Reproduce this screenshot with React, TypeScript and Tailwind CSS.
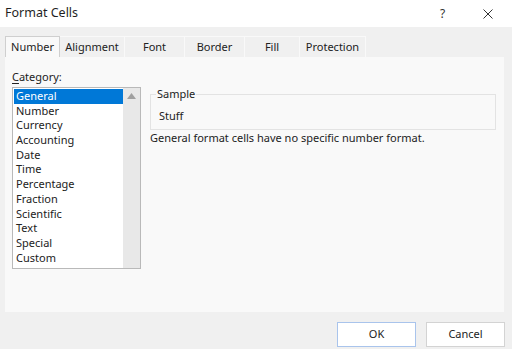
import { useState } from 'react';

const categories = [
  'General', 'Number', 'Currency', 'Accounting', 'Date', 'Time',
  'Percentage', 'Fraction', 'Scientific', 'Text', 'Special', 'Custom',
];

const tabs = [
  { name: 'Number', w: 'w-[55px]' },
  { name: 'Alignment', w: 'w-[65px]' },
  { name: 'Font', w: 'w-[60px]' },
  { name: 'Border', w: 'w-[60px]' },
  { name: 'Fill', w: 'w-[55px]' },
  { name: 'Protection', w: 'w-[66px]' },
];

export default function App() {
  const [selected, setSelected] = useState('General');
  const [tab, setTab] = useState('Number');

  return (
    <div className="w-[512px] h-[349px] bg-[#f0f0f0] flex flex-col text-[#222] font-['Noto_Sans',sans-serif] text-[11px] overflow-hidden">
      {/* Title bar */}
      <div className="h-[27px] bg-white flex items-center pl-[5px] shrink-0">
        <span className="text-[12.5px] text-[#1f1f1f]">Format Cells</span>
        <div className="ml-auto flex items-center">
          <span className="text-[12px] w-[10px] mr-[33px] text-[#333]">?</span>
          <svg className="w-[10px] h-[10px] mr-[19px]" viewBox="0 0 10 10" fill="none" stroke="#333" strokeWidth="1">
            <path d="M0.5 0.5l9 9M9.5 0.5l-9 9" />
          </svg>
        </div>
      </div>

      <div className="flex-1 flex flex-col pl-[5px] pr-[8px]">
        {/* Tabs */}
        <div className="flex mt-[9px] h-[21px]">
          {tabs.map((t) => (
            <button
              key={t.name}
              onClick={() => setTab(t.name)}
              className={`${t.w} h-[21px] flex items-center justify-center border border-b-0 ${
                tab === t.name
                  ? 'bg-[#f9f9f9] border-[#cfcfcf] z-10'
                  : 'bg-[#f0f0f0] border-[#f9f9f9] border-l-0'
              }`}
            >
              {t.name}
            </button>
          ))}
        </div>

        {/* Panel */}
        <div className="h-[255px] bg-[#f9f9f9] flex pl-[7px] pt-[10px]">
          <div className="flex flex-col w-[129px]">
            <div className="h-[20px] leading-[20px]">
              <span className="underline underline-offset-2">C</span>ategory:
            </div>
            <div className="h-[182px] flex border border-[#b9b9b9] bg-white">
              <ul className="flex-1 pt-px pl-px">
                {categories.map((c) => (
                  <li
                    key={c}
                    onClick={() => setSelected(c)}
                    className={`h-[14.7px] leading-[14.7px] pl-[2px] ${
                      selected === c ? 'bg-[#0078d7] text-white' : ''
                    }`}
                  >
                    {c}
                  </li>
                ))}
              </ul>
              <div className="w-[17px] bg-[#e8e8e8] flex justify-center pt-[5px]">
                <svg className="w-[9px] h-[6px]" viewBox="0 0 9 6" fill="#a0a0a0">
                  <path d="M4.5 0L9 6H0z" />
                </svg>
              </div>
            </div>
          </div>

          <div className="flex-1 flex flex-col pl-[9px] pr-[8px]">
            <fieldset className="border border-[#e3e3e3] h-[42px] mt-[21px] px-[5px]">
              <legend className="px-px text-[11px] leading-[12px]">Sample</legend>
              <div className="pl-[3px] pt-[9px] leading-[14px]">Stuff</div>
            </fieldset>
            <p className="mt-[1px] leading-[14px]">General format cells have no specific number format.</p>
          </div>
        </div>

        {/* Buttons */}
        <div className="flex justify-end gap-[10px] mt-[10px] mr-[-1px]">
          <button className="w-[79px] h-[25px] bg-white border border-[#a9c4ec] text-[11px]">OK</button>
          <button className="w-[79px] h-[25px] bg-white border border-[#d3d3d3] text-[11px]">Cancel</button>
        </div>
      </div>
    </div>
  );
}
